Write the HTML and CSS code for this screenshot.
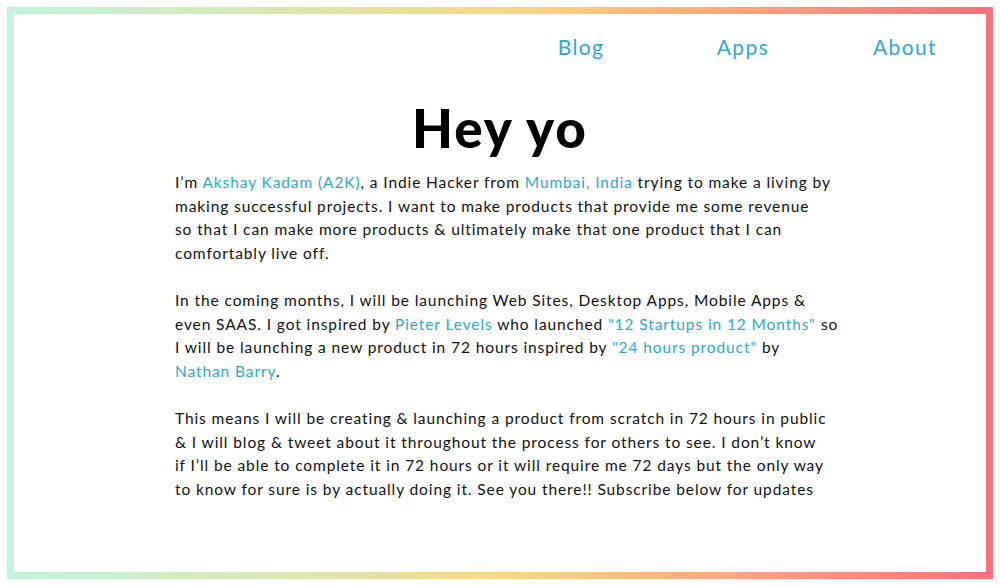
FILE: index.html
```html
<!DOCTYPE html>
<html lang="en">
<head>
<meta charset="utf-8">
<title>Hey yo</title>
<link rel="stylesheet" href="styles.css">
</head>
<body>
<div class="frame">
  <nav class="nav">
    <a class="nav-item" href="#">Blog</a>
    <a class="nav-item" href="#">Apps</a>
    <a class="nav-item" href="#">About</a>
  </nav>
  <main class="content">
    <h1 class="title">Hey yo</h1>
    <p class="para">I’m <a href="#">Akshay Kadam (A2K)</a>, a Indie Hacker from <a href="#">Mumbai, India</a> trying to make a living by<br>making successful projects. I want to make products that provide me some revenue<br>so that I can make more products &amp; ultimately make that one product that I can<br>comfortably live off.</p>
    <p class="para">In the coming months, I will be launching Web Sites, Desktop Apps, Mobile Apps &amp;<br>even SAAS. I got inspired by <a href="#">Pieter Levels</a> who launched <a href="#">"12 Startups in 12 Months"</a> so<br>I will be launching a new product in 72 hours inspired by <a href="#">"24 hours product"</a> by<br><a href="#">Nathan Barry</a>.</p>
    <p class="para">This means I will be creating &amp; launching a product from scratch in 72 hours in public<br>&amp; I will blog &amp; tweet about it throughout the process for others to see. I don’t know<br>if I’ll be able to complete it in 72 hours or it will require me 72 days but the only way<br>to know for sure is by actually doing it. See you there!! Subscribe below for updates</p>
  </main>
</div>
</body>
</html>
```
FILE: styles.css
```css
html, body {
  margin: 0;
  padding: 0;
  background: #ffffff;
}
body {
  padding: 7px;
  font-family: Lato, "Noto Sans", sans-serif;
  color: #111111;
}
.frame {
  height: 572px;
  box-sizing: border-box;
  border: 7px solid transparent;
  border-image: linear-gradient(to right, #c1f4dc 0%, #d9e9b6 25%, #f6d88a 50%, #f8a57c 75%, #f8727b 100%) 1;
  display: flex;
  flex-direction: column;
}
.nav {
  display: flex;
  justify-content: flex-end;
  margin-top: 18px;
}
.nav-item {
  width: 162px;
  text-align: center;
  font-size: 21px;
  line-height: 30px;
  letter-spacing: 1.4px;
  color: #2fa7d0;
  text-decoration: none;
}
.content {
  width: 650px;
  margin: 0 auto;
}
.title {
  margin: 36px 0 0;
  text-align: center;
  font-size: 53px;
  line-height: 60px;
  font-weight: 900;
  letter-spacing: 2px;
  color: #000000;
}
.para {
  margin: 13px 0 23.6px;
  font-size: 15.5px;
  line-height: 23.6px;
  letter-spacing: 0.9px;
  white-space: nowrap;
}
.para + .para {
  margin-top: 0;
}
.para a {
  color: #2fa7d0;
  text-decoration: none;
}
```
